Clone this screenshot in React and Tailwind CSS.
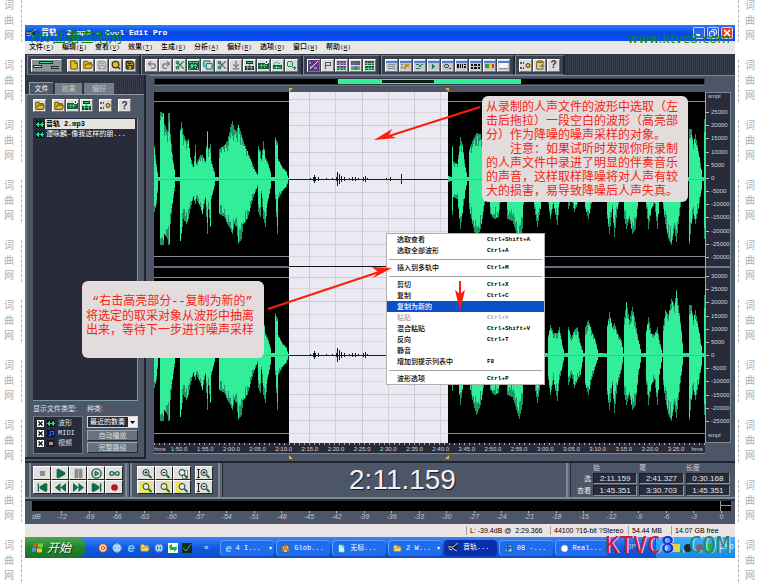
import { useState } from "react";
import {
  ArrowDownToLine,
  Chrome,
  CirclePlay,
  ClipboardPaste,
  Copy,
  File,
  FolderOpen,
  Globe,
  Infinity as Loop,
  Pause,
  Play,
  Redo2,
  Save,
  Scissors,
  Search,
  SkipBack,
  SkipForward,
  Square,
  Table2,
  Undo2,
  X,
} from "lucide-react";

const menus = ["文件(F)", "编辑(E)", "查看(V)", "效果(T)", "生成(G)", "分析(A)", "偏好(R)", "选项(O)", "窗口(W)", "帮助(H)"];

const contextMenu = [
  ["选取查看", "Ctrl+Shift+A"],
  ["选取全部波形", "Ctrl+A"],
  null,
  ["插入到多轨中", "Ctrl+M"],
  null,
  ["剪切", "Ctrl+X"],
  ["复制", "Ctrl+C"],
  ["复制为新的", ""],
  ["粘贴", "Ctrl+V", true],
  ["混合粘贴", "Ctrl+Shift+V"],
  ["反向", "Ctrl+T"],
  ["静音", ""],
  ["增加到提示列表中", "F8"],
  null,
  ["波形选项", "Ctrl+P"],
];

const times = [
  "1:50.0", "1:55.0", "2:00.0", "2:05.0", "2:10.0", "2:15.0", "2:20.0", "2:25.0", "2:30.0", "2:35.0",
  "2:40.0", "2:45.0", "2:50.0", "2:55.0", "3:00.0", "3:05.0", "3:10.0", "3:15.0", "3:20.0", "3:25.0",
];

const levels = Array.from({ length: 25 }, (_, i) => -72 + i * 3);
const topScale = Array.from({ length: 12 }, (_, i) => 25000 - i * 5000);
const bottomScale = Array.from({ length: 12 }, (_, i) => 30000 - i * 5000);

// [x, height above the centre, depth below the centre]
const envelope = [
  [0, 33, 33], [2, 15, 25], [4, 2, 2], [5, 2, 2], [6, 67, 66], [9, 66, 66], [10, 55, 55], [13, 48, 60], [14, 66, 66],
  [15, 66, 66], [16, 45, 45], [18, 25, 25], [20, 10, 12], [21, 2, 2], [25, 2, 2], [26, 50, 62], [27, 57, 55],
  [29, 45, 40], [32, 38, 45], [34, 40, 40], [36, 22, 30], [39, 12, 18], [41, 34, 25], [42, 16, 20], [46, 24, 28],
  [48, 24, 35], [51, 18, 20], [53, 48, 55], [54, 30, 30], [56, 35, 48], [57, 18, 20], [60, 8, 8], [61, 2, 2],
  [64, 2, 2], [65, 30, 35], [70, 34, 38], [73, 38, 45], [76, 52, 50], [78, 58, 55], [80, 50, 45], [82, 48, 48],
  [84, 54, 65], [87, 45, 60], [89, 38, 45], [93, 28, 40], [97, 18, 25], [100, 10, 15], [103, 5, 8], [104, 33, 33],
  [106, 28, 38], [107, 20, 15], [109, 38, 40], [111, 22, 48], [113, 18, 25], [116, 8, 10], [117, 2, 2], [120, 2, 2],
  [121, 42, 20], [123, 37, 55], [124, 20, 20], [128, 12, 12], [132, 8, 8], [134, 1, 1], [293, 1, 1], [294, 3, 3],
  [297, 2, 2], [298, 33, 36], [299, 18, 18], [303, 15, 20], [306, 42, 50], [308, 35, 35], [311, 12, 12], [313, 2, 2],
  [314, 2, 2], [315, 30, 30], [318, 38, 45], [322, 46, 60], [326, 45, 50], [328, 35, 40], [333, 5, 5], [335, 2, 2],
  [336, 25, 35], [340, 30, 40], [344, 25, 38], [349, 3, 3], [352, 2, 2], [353, 30, 40], [358, 35, 42], [365, 50, 64],
  [368, 30, 50], [370, 2, 2], [379, 2, 2], [380, 30, 30], [383, 35, 48], [386, 20, 30], [389, 2, 2], [393, 2, 2],
  [394, 20, 25], [396, 30, 40], [399, 22, 25], [403, 22, 46], [405, 28, 25], [408, 10, 12], [410, 2, 2], [413, 2, 2],
  [414, 28, 30], [417, 18, 20], [420, 25, 33], [423, 28, 25], [426, 12, 20], [429, 2, 2], [430, 2, 2], [431, 28, 30],
  [434, 35, 40], [437, 25, 25], [441, 15, 12], [444, 2, 2], [452, 2, 2], [453, 30, 40], [455, 43, 55], [458, 28, 30],
  [460, 32, 58], [463, 22, 30], [467, 15, 15], [469, 2, 2], [470, 38, 40], [472, 53, 50], [475, 35, 40],
  [478, 48, 55], [481, 33, 50], [484, 15, 20], [487, 2, 2], [491, 2, 2], [492, 25, 30], [494, 38, 50], [497, 22, 30],
  [500, 20, 25], [503, 28, 50], [505, 15, 20], [508, 2, 2], [509, 30, 30], [511, 45, 45], [514, 40, 60],
  [517, 56, 66], [520, 50, 50], [522, 65, 63], [524, 50, 45], [527, 25, 20], [529, 2, 2], [534, 2, 2], [535, 50, 65],
  [537, 50, 45], [539, 35, 35], [541, 45, 45], [544, 28, 30], [547, 10, 12], [548, 2, 2], [549, 2, 2], [550, 60, 60],
];

function noise(n) {
  const v = Math.sin(n * 127.1) * 43758.5453;
  return v - Math.floor(v);
}

function wavePath(center, rough) {
  let d = "";
  let k = 0;
  for (let x = 0; x <= 550; x++) {
    while (k < envelope.length - 2 && envelope[k + 1][0] <= x) k++;
    const [x0, u0, d0] = envelope[k];
    const [x1, u1, d1] = envelope[k + 1];
    const t = Math.min(1, (x - x0) / (x1 - x0));
    const up = (u0 + (u1 - u0) * t) * (1 - rough * noise(x + 1));
    const down = (d0 + (d1 - d0) * t) * (1 - rough * noise(x + 700));
    d += `M${x} ${Math.round(center - up)}h1V${Math.round(center + down)}h-1z`;
  }
  return d;
}

const quiet = [
  [156, 1], [159, 2], [160, 4], [161, 2], [164, 2], [172, 1], [178, 1], [182, 2], [183, 7], [185, 5],
  [187, 3], [190, 2], [195, 1], [198, 2], [201, 2], [204, 1], [209, 2], [211, 3], [213, 1], [232, 1], [236, 2], [247, 5],
];

function Waveform() {
  const centers = [87, 263];
  return (
    <svg viewBox="0 0 551 351" preserveAspectRatio="none" shapeRendering="crispEdges" className="block h-[351px] w-full bg-black">
      {[9, 164, 185, 341].map((y) => (
        <path key={y} d={`M0 ${y}h551v1h-551z`} fill="#8c8a96" />
      ))}
      {centers.map((c) => (
        <g key={c}>
          <path d={wavePath(c, 0)} fill="#1f9464" />
          <path d={wavePath(c, 0.3)} fill="#33ee99" />
          <path d={`M0 ${c}h551v1h-551z`} fill="#2bd086" />
        </g>
      ))}
      <path d="M0 174h551v2h-551z" fill="#666c80" />
      <path d="M135 0h159v351h-159z" fill="#ebeaf4" />
      {[7, 20, 33, 46, 60, 73, 100, 113, 126, 139, 152, 164, 185, 196, 209, 222, 236, 249, 276, 289, 302, 315, 328, 341].map((y, i) => (
        <path key={y} d={`M135 ${y}h159v1h-159z`} fill={i % 2 ? "#dcd6d4" : "#c8ccd4"} />
      ))}
      {[155, 181, 208, 234, 260, 286].map((x, i) => (
        <path key={x} d={`M${x} 0h1v351h-1z`} fill={i % 2 ? "#d8cfcc" : "#c6cad4"} />
      ))}
      <path d="M135 174h159v1h-159z" fill="#10131c" />
      {centers.map((c) => (
        <g key={c} fill="#0c2420">
          <path d={`M135 ${c}h159v1h-159z`} />
          {quiet.map(([x, h]) => (
            <path key={x} d={`M${x} ${c - h}h1v${h * 2}h-1z`} />
          ))}
        </g>
      ))}
    </svg>
  );
}

function ToolGroup({ children }) {
  return (
    <div className="flex items-center gap-px border-y border-r-2 border-l border-y-[#6b788a] border-r-[#20242e] border-l-[#7d8a9a] bg-[#3a4150] px-[3px]">
      {children}
    </div>
  );
}

function ToolButton({ label, children }) {
  return (
    <button
      aria-label={label}
      className="flex h-[13px] w-[13px] items-center justify-center border border-t-white border-r-[#77787c] border-b-[#77787c] border-l-white bg-[#dcdad8] text-[10px] leading-none font-bold text-[#35342a]"
    >
      {children}
    </button>
  );
}

function Tool({ icon: Icon, color = "text-[#1c7a4a]", fill = "none", label }) {
  return (
    <ToolButton label={label}>
      <Icon size={10} strokeWidth={3} fill={fill} className={color} />
    </ToolButton>
  );
}

function WaveGlyph() {
  return (
    <svg width="8" height="7" viewBox="0 0 8 7" shapeRendering="crispEdges" className="shrink-0">
      <path d="M0 0h8v7H0z" fill="#07140f" />
      <path d="M0 3h8v1H0zM1 2h1v3H1zM2 1h1v5H2zM5 2h1v3H5zM6 1h1v5H6z" fill="#2fd68c" />
    </svg>
  );
}

// Eleven by eleven pixel drawings for the edit commands
const waveArt = {
  spectrum: [["#6b2f88", "M0 0h11v11H0z"], ["#2cc873", "M1 2h2v2H1zM2 6h2v2H2zM6 7h3v2H6z"], ["#f0e8f4", "M9 1h1v1H9zM8 2h1v1H8zM7 3h1v1H7zM6 4h1v1H6zM5 5h1v1H5zM4 6h1v1H4zM3 7h1v1H3zM2 8h1v1H2z"]],
  flag: [["#5d4f78", "M3 2h6v1H3zM3 3h1v6H3zM8 3h1v2H8zM4 5h5v1H4z"]],
  both: [["#7b3c96", "M1 1h9v4H1zM1 6h9v4H1z"], ["#2cc873", "M1 3h9v1H1zM3 2h2v3H3zM7 2h1v3H7zM1 8h9v1H1zM3 7h2v3H3zM7 7h1v3H7z"]],
  left: [["#7b3c96", "M1 1h9v4H1z"], ["#b478c8", "M1 6h9v4H1z"], ["#1c9c54", "M2 3h7v1H2zM3 2h2v3H3zM2 8h7v1H2zM5 6h2v4H5z"]],
  right: [["#1c5c38", "M1 1h9v4H1zM1 6h9v4H1z"], ["#38dc84", "M1 3h9v1H1zM3 2h1v3H3zM7 2h1v3H7zM1 8h9v1H1zM4 7h1v3H4zM7 7h1v3H7z"]],
  framed: [["#145c38", "M0 1h11v9H0z"], ["#38dc84", "M1 2h3v1H1zM7 2h3v1H7zM2 5h7v1H2zM3 4h2v4H3zM7 4h1v4H7zM1 8h2v1H1z"], ["#f0f4f0", "M5 2h1v1H5zM9 8h1v1H9z"]],
  mix: [["#123a24", "M2 1h7v3H2zM1 6h9v4H1z"], ["#2cc873", "M3 2h5v1H3zM5 4h1v2H5zM2 7h7v1H2zM3 6h1v4H3zM7 6h1v4H7z"]],
  insert: [["#145c38", "M0 3h11v6H0z"], ["#2cc873", "M1 5h8v1H1zM3 4h1v4H3zM6 4h1v4H6z"], ["#e4ece8", "M7 0h3v4H7z"], ["#30544c", "M8 1h1v2H8z"]],
  convert: [["#145c38", "M1 5h9v4H1z"], ["#38c8a0", "M3 2h3v1H3zM6 3h2v1H6zM2 3h1v2H2z"], ["#38dc84", "M2 7h7v1H2zM4 6h1v3H4z"]],
  sample: [["#1c9460", "M2 1h4v1H2zM1 2h1v4H1zM6 2h1v4H6zM2 6h4v1H2zM6 7h3v1H6zM8 6h1v4H8zM9 7h1v2H9z"], ["#8ce8c0", "M3 3h2v2H3z"]],
};

function WaveTool({ label, art }) {
  return (
    <ToolButton label={label}>
      <svg width="11" height="11" viewBox="0 0 11 11" shapeRendering="crispEdges" className="shrink-0">
        {waveArt[art].map(([fill, d]) => (
          <path key={d} fill={fill} d={d} />
        ))}
      </svg>
    </ToolButton>
  );
}

const windowArt = {
  lines: [["#8c9098", "M2 4h7v1H2zM2 6h7v1H2zM2 8h7v1H2z"]],
  cue: [["#b8941c", "M5 4h4v3H5zM4 6h2v3H4z"], ["#70747c", "M1 4h2v1H1zM1 7h2v1H1z"]],
  list: [["#1d7864", "M2 4h3v1H2zM5 5h2v2H5zM7 4h2v1H7zM2 8h4v1H2z"]],
  play: [["#1c7a4a", "M4 4h1v5H4zM5 5h1v3H5zM6 6h1v1H6z"]],
  zoom: [["#3c4450", "M3 4h3v1H3zM2 5h1v2H2zM6 5h1v2H6zM3 7h3v1H3zM7 8h2v1H7z"]],
  time: [["#101010", "M1 4h2v4H1zM4 4h1v4H4zM6 4h1v4H6zM8 4h2v1H8zM8 6h2v2H8z"]],
  range: [["#101010", "M1 4h2v2H1zM4 4h3v2H4zM8 4h2v2H8zM1 7h2v2H1zM4 7h3v2H4zM8 7h2v2H8z"]],
  meter: [["#2ca03c", "M1 4h4v4H1z"], ["#e8c820", "M5 4h3v4H5z"], ["#d83a24", "M8 4h2v4H8z"]],
  status: [["#f4f4f4", "M1 3h9v5H1z"], ["#8c9098", "M1 8h9v1H1z"]],
};

function WindowTool({ label, art }) {
  return (
    <ToolButton label={label}>
      <svg width="11" height="11" viewBox="0 0 11 11" shapeRendering="crispEdges" className="shrink-0">
        <path d="M0 1h11v9H0z" fill="#c4c8ce" />
        <path d="M0 1h11v2H0z" fill="#4a80dc" />
        {windowArt[art].map(([fill, d]) => (
          <path key={d} fill={fill} d={d} />
        ))}
      </svg>
    </ToolButton>
  );
}

function CueTool() {
  return (
    <ToolButton label="选项">
      <svg width="11" height="9" viewBox="0 0 11 9" className="shrink-0">
        <path d="M0 1h2v2H0zM0 6h2v2H0zM3 1h1v2H3zM3 6h1v2H3z" fill="#555" />
        <circle cx="8" cy="4.5" r="2" fill="#e8c820" stroke="#4a4010" />
      </svg>
    </ToolButton>
  );
}

function Toolbar() {
  const gold = "text-[#8a6c08]";
  return (
    <div className="flex h-[21px] bg-[#2b2e3c] bg-[repeating-linear-gradient(90deg,#2b2e3c_0_1px,#3b404e_1px_2px)] px-0.5 pt-px">
      <ToolGroup>
        <button aria-label="多轨视图" className="mr-1 flex h-[13px] w-[31px] items-center justify-center border border-t-white border-r-[#777] border-b-[#777] border-l-white bg-[#8c9494]">
          <svg width="27" height="9" viewBox="0 0 27 9" shapeRendering="crispEdges">
            <path d="M6 0h14v3H6zM0 4h9v3H0zM18 5h8v3h-8z" fill="#14302a" />
            <path d="M7 1h12v1H7zM19 6h7v1h-7z" fill="#33d98e" />
            <path d="M1 5h7v1H1z" fill="#d8dcdc" />
          </svg>
        </button>
        <Tool icon={File} label="新建" color={gold} fill="#e0c030" />
        <Tool icon={FolderOpen} label="打开" color={gold} fill="#e0c030" />
        <Tool icon={Save} label="保存" color="text-[#9a9b9e]" />
        <Tool icon={Search} label="另存" color="text-[#3c3a14]" fill="#e0c030" />
        <Tool icon={Save} label="全部保存" color="text-[#2c2a10]" fill="#c8a820" />
      </ToolGroup>
      <ToolGroup>
        <Tool icon={Undo2} label="撤消" color="text-[#77787c]" />
        <Tool icon={Redo2} label="重做" color="text-[#77787c]" />
        <Tool icon={Scissors} label="修剪" />
        <WaveTool art="framed" label="波形" />
        <Tool icon={Copy} label="复制" color="text-[#168a80]" />
        <Tool icon={Scissors} label="剪切" color="text-[#22706a]" />
        <Tool icon={ArrowDownToLine} label="粘贴" color="text-[#77787c]" />
        <WaveTool art="mix" label="混合" />
        <WaveTool art="insert" label="插入" />
        <WaveTool art="convert" label="转换" />
        <WaveTool art="sample" label="采样" />
      </ToolGroup>
      <ToolGroup>
        <WaveTool art="spectrum" label="频谱" />
        <WaveTool art="flag" label="标记" />
        <WaveTool art="both" label="通道" />
        <WaveTool art="left" label="左通道" />
        <WaveTool art="right" label="右通道" />
      </ToolGroup>
      <ToolGroup>
        <WindowTool art="lines" label="管理器" />
        <WindowTool art="cue" label="提示列表" />
        <WindowTool art="list" label="播放列表" />
        <WindowTool art="play" label="走带" />
        <WindowTool art="zoom" label="缩放" />
        <WindowTool art="time" label="时间" />
        <WindowTool art="range" label="选区" />
        <WindowTool art="meter" label="电平" />
        <WindowTool art="status" label="状态" />
      </ToolGroup>
      <ToolGroup>
        <CueTool />
        <Tool icon={ClipboardPaste} label="脚本" color={gold} />
        <ToolButton>?</ToolButton>
      </ToolGroup>
    </div>
  );
}

function FilePanel() {
  const [types, setTypes] = useState({ 波形: true, MIDI: true, 视频: true });
  const gold = "text-[#7c6210]";
  return (
    <section className="flex w-[125px] shrink-0 flex-col border-r-4 border-r-[#4d5668] bg-[#4d5666] text-[7px] leading-[10px]">
      <div className="flex flex-1 flex-col border-r-2 border-[#20232e]">
        <div className="flex h-[19px] items-end gap-0.5 bg-[repeating-linear-gradient(90deg,#2b2e3c_0_1px,#383c4a_1px_2px)] pl-1 text-[#c2c8ce]">
          <button className="h-[12px] w-[24px] border-t border-l border-[#8b98a6] bg-[#4d5666] text-white">文件</button>
          <button className="h-[11px] w-[27px] bg-[#747e8a]">效果</button>
          <button className="h-[11px] w-[30px] bg-[#747e8a]">偏好</button>
        </div>
        <div className="flex flex-1 flex-col border-t border-l-2 border-t-[#8b98a6] border-l-[#6a7686] px-[6px] pb-[3px]">
          <div className="flex gap-px pt-1 pb-[6px]">
            <Tool icon={FolderOpen} label="打开文件" color={gold} fill="#e0c030" />
            <div className="ml-[5px] flex gap-px">
              <Tool icon={FolderOpen} label="关闭文件" color={gold} fill="#e0c030" />
              <WaveTool art="insert" label="插入多轨" />
              <WaveTool art="mix" label="编辑文件" />
            </div>
            <div className="mx-[5px] flex">
              <CueTool />
            </div>
            <ToolButton>?</ToolButton>
          </div>
          <ul className="flex-1 border-r border-b border-[#7d99a0] bg-[#282b3a] pt-px text-white">
            <li className="flex items-center gap-px pr-0.5 pl-[3px]">
              <WaveGlyph />
              <span className="flex-1 bg-[#e6e2de] pl-px font-bold whitespace-pre text-black">
                音轨{"  "}<span className="font-['Liberation_Mono','Noto_Sans_CJK_SC',monospace]">2.mp3</span>
              </span>
            </li>
            <li className="flex items-center gap-0.5 pl-[3px]">
              <WaveGlyph />
              <span className="font-['Liberation_Mono','Noto_Sans_CJK_SC',monospace]">谭咏麟-像我这样的朋...</span>
            </li>
          </ul>
          <div className="mt-[3px] flex gap-1 text-[#dde2e6]">
            <fieldset className="w-[50px]">
              <legend className="whitespace-nowrap">显示文件类型:</legend>
              <div className="mt-0.5 flex h-[38px] flex-col border border-[#6d7a88] bg-[#282b3a] pt-px pl-[3px]">
                {Object.keys(types).map((name) => (
                  <label key={name} className="flex h-[10px] items-center gap-[3px]">
                    <span className="grid">
                      <input
                        type="checkbox"
                        checked={types[name]}
                        onChange={() => setTypes({ ...types, [name]: !types[name] })}
                        className="col-start-1 row-start-1 h-[7px] w-[7px] appearance-none bg-white"
                      />
                      {types[name] && (
                        <X size={7} strokeWidth={4} className="pointer-events-none col-start-1 row-start-1 text-black" />
                      )}
                    </span>
                    {name === "波形" && <WaveGlyph />}
                    {name === "MIDI" && (
                      <svg width="8" height="7" viewBox="0 0 8 7" shapeRendering="crispEdges">
                        <path d="M0 0h8v7H0z" fill="#0a1030" />
                        <path d="M3 1h4v1H3zM3 2h1v4H3zM6 2h1v3H6zM2 5h1v1H2zM5 4h1v1H5z" fill="#2c70ff" />
                      </svg>
                    )}
                    {name === "视频" && (
                      <svg width="8" height="7" viewBox="0 0 8 7" shapeRendering="crispEdges">
                        <path d="M0 0h8v7H0z" fill="#1b1c22" />
                        <path d="M2 2h4v3H2z" fill="#a89c98" />
                      </svg>
                    )}
                    <span className="font-['Liberation_Mono','Noto_Sans_CJK_SC',monospace]">{name}</span>
                  </label>
                ))}
              </div>
            </fieldset>
            <div className="flex flex-1 flex-col">
              <label htmlFor="sort">种类:</label>
              <div className="mt-0.5 grid">
                <select
                  id="sort"
                  className="col-start-1 row-start-1 h-[12px] w-full appearance-none border border-[#d8d6d4] bg-[#282b3a] pl-0.5 text-[7px] leading-[10px] text-white"
                >
                  <option>最近的数奏</option>
                </select>
                <svg width="9" height="10" viewBox="0 0 9 10" className="pointer-events-none col-start-1 row-start-1 mr-px self-center justify-self-end">
                  <path d="M0 0h9v10H0z" fill="#f4f2f0" />
                  <path d="M2 4h5L4.500 7z" fill="#000" />
                </svg>
              </div>
              <button className="mt-0.5 h-[11px] border border-t-[#9aa8b2] border-r-[#242833] border-b-[#242833] border-l-[#9aa8b2] bg-[#66727e] leading-[9px]">自动播放</button>
              <button className="mt-px h-[11px] border border-t-[#9aa8b2] border-r-[#242833] border-b-[#242833] border-l-[#9aa8b2] bg-[#66727e] leading-[9px]">完整路径</button>
            </div>
          </div>
        </div>
      </div>
      <div className="h-1 border-t-2 border-[#20232e]" />
    </section>
  );
}

function ScaleCells({ values }) {
  return (
    <div className="flex h-[158px] flex-col">
      {values.map((v) => (
        <span key={v} className="flex flex-1 items-center gap-0.5">
          <i className="h-px w-[3px] bg-[#b8bcc4]" />
          {v}
        </span>
      ))}
    </div>
  );
}

function Marker({ className }) {
  return (
    <svg width="4" height="4" viewBox="0 0 4 4" className={className}>
      <path d="M0 0h4L0 4z" fill="#e0b820" />
    </svg>
  );
}

function WavePanel() {
  return (
    <section className="min-w-0 flex-1 border-t border-[#7a8796] bg-[#4d5666] pt-0.5 pr-1 pl-1 text-[6px] text-[#d0d4dc]">
      <div className="mr-[26px] flex h-[7px] border border-[#333a46] bg-black">
        <div className="w-1/3" />
        <div className="w-[8%] bg-[#33ee99]" />
        <div className="w-[9.5%] border-y border-[#33ee99] bg-[#0b1c18]" />
        <div className="w-[15.8%] bg-[#33ee99]" />
      </div>
      <div className="mr-[26px] flex h-[7px] items-end border-t border-[#66727e]">
        <div className="w-[24.5%]" />
        <div className="flex w-[29%] justify-between">
          <Marker />
          <Marker className="-scale-x-100" />
        </div>
      </div>
      <div className="flex">
        <div className="min-w-0 flex-1">
          <Waveform />
        </div>
        <div className="flex w-[26px] flex-col border-t border-r border-b border-[#7a8796] border-l border-l-[#a0a4ac] bg-[#282b3a]">
          <span className="h-[13px] pl-0.5 leading-[7px]">smpl</span>
          <ScaleCells values={topScale} />
          <i className="mt-0.5 mb-0.5 h-0.5 bg-[#6d7888]" />
          <ScaleCells values={bottomScale} />
          <span className="pt-1 pl-0.5 leading-[7px]">smpl</span>
        </div>
      </div>
      <div className="mr-[26px] flex h-[11px] items-end border-b border-[#7a8796] bg-[#282b3a] bg-[repeating-linear-gradient(90deg,#a8acb4_0_1px,transparent_1px_5px)] bg-[length:100%_2px] bg-no-repeat text-center leading-[8px]">
        <span className="w-[12px]">hms</span>
        {times.map((t) => (
          <span key={t} className="flex-1">{t}</span>
        ))}
        <span className="w-[16px]">hms</span>
      </div>
      <div className="mr-[26px] flex h-[7px] items-start pt-px">
        <div className="w-[24.5%]" />
        <div className="flex w-[29%] justify-between">
          <Marker className="-scale-y-100" />
          <Marker className="-scale-100" />
        </div>
      </div>
    </section>
  );
}

function BigTool({ icon: Icon, label, color = "text-[#0f6b4a]", fill = "none", children }) {
  return (
    <button
      aria-label={label}
      className="flex h-[14px] w-[18px] items-center justify-center border border-t-white border-r-[#22252e] border-b-[#22252e] border-l-white bg-[#e2dfdc]"
    >
      {Icon ? <Icon size={11} strokeWidth={3} fill={fill} className={color} /> : children}
    </button>
  );
}

function Rewind({ size, className }) {
  return (
    <svg width={size} height={size} viewBox="0 0 10 10" className={className} fill="currentColor">
      <path d="M5 1v8L0 5zM10 1v8L5 5z" />
    </svg>
  );
}

function Forward({ size, className }) {
  return (
    <svg width={size} height={size} viewBox="0 0 10 10" className={className} fill="currentColor">
      <path d="M0 1v8l5-4zM5 1v8l5-4z" />
    </svg>
  );
}

function Record({ size, className }) {
  return (
    <svg width={size} height={size} viewBox="0 0 10 10" className={className} fill="currentColor">
      <circle cx="5" cy="5" r="3" />
    </svg>
  );
}

function Lens({ mark, page, vertical }) {
  return (
    <svg width="14" height="11" viewBox="0 0 14 11" className="shrink-0">
      {page && <path d={page[1]} fill={page[0]} stroke={page[2]} />}
      {vertical && <path d="M1.500 1v9M0 1.500h3M0 9.500h3" stroke="#222" />}
      <circle cx="7" cy="4.500" r="3" fill="#dcecea" stroke="#26302e" />
      {mark && <path d={mark} stroke="#26302e" />}
      <path d="M9.500 7l3 3" stroke="#12704c" strokeWidth="2" />
    </svg>
  );
}

function Splitter() {
  return <div className="w-[5px] border-r border-l-2 border-r-[#252936] border-l-[#7d8a9a] bg-[#5d6878]" />;
}

function TransportPanel() {
  const plus = "M5.500 4.500h3M7 3v3";
  const minus = "M5.500 4.500h3";
  return (
    <section className="flex h-[38px] border-y-2 border-t-[#1f2430] border-b-[#7d8a9a] bg-[#4d5666] pl-1">
      <div className="flex items-center border-l-2 border-[#7d8a9a] px-0.5">
        <div className="grid grid-cols-5">
          <BigTool label="停止">
            <i className="h-[5px] w-[5px] bg-[#8b8c90]" />
          </BigTool>
          <BigTool icon={Play} label="播放" fill="#0f6b4a" />
          <BigTool icon={Pause} label="暂停" color="text-[#8b8c90]" fill="#8b8c90" />
          <BigTool icon={CirclePlay} label="播放到结尾" />
          <BigTool icon={Loop} label="循环播放" />
          <BigTool icon={SkipBack} label="到开头" fill="#0f6b4a" />
          <BigTool icon={Rewind} label="快退" />
          <BigTool icon={Forward} label="快进" />
          <BigTool icon={SkipForward} label="到结尾" fill="#0f6b4a" />
          <BigTool icon={Record} label="录音" color="text-[#b01828]" />
        </div>
      </div>
      <Splitter />
      <div className="flex items-center gap-1 border-l-2 border-[#7d8a9a] px-[5px]">
        <div className="grid grid-cols-3">
          <BigTool label="水平放大">
            <Lens mark={plus} />
          </BigTool>
          <BigTool label="水平缩小">
            <Lens mark={minus} />
          </BigTool>
          <BigTool label="全部显示">
            <Lens page={["#fafafa", "M7.500 2.500h5v8h-5z", "#888"]} />
          </BigTool>
          <BigTool label="缩放到选区">
            <Lens page={["#f4ec50", "M1.500 .5h11v10h-11z", "#e8dc60"]} />
          </BigTool>
          <BigTool label="放大左边缘">
            <Lens page={["#f4ec50", "M7.500 .5h5v10h-5z", "#e8dc60"]} />
          </BigTool>
          <BigTool label="放大右边缘">
            <Lens page={["#f4ec50", "M1.500 .5h5v10h-5z", "#e8dc60"]} />
          </BigTool>
        </div>
        <div className="grid">
          <BigTool label="垂直放大">
            <Lens vertical mark={plus} />
          </BigTool>
          <BigTool label="垂直缩小">
            <Lens vertical mark={minus} />
          </BigTool>
        </div>
      </div>
      <Splitter />
      <div className="flex flex-1 items-center justify-center pl-4 text-[28px] leading-none text-[#f2f0f6] [text-shadow:1px_1px_0_#1c2028]">
        2:11.159
      </div>
      <Splitter />
      <table className="mr-[3px] w-[161px] border-separate border-spacing-x-[2px] border-spacing-y-px text-center text-[8px] leading-[9px] text-[#e4e6ea]">
        <thead className="text-left text-[7px] leading-[8px] text-[#c8ced4]">
          <tr>
            <td className="w-[18px]" />
            <th className="p-0 font-normal">始</th>
            <th className="p-0 font-normal">尾</th>
            <th className="p-0 font-normal">长度</th>
          </tr>
        </thead>
        <tbody>
          {[
            ["选", "2:11.159", "2:41.327", "0:30.168"],
            ["查看", "1:45.351", "3:30.703", "1:45.351"],
          ].map(([name, ...cells]) => (
            <tr key={name}>
              <th className="p-0 text-right text-[7px] font-normal">{name}</th>
              {cells.map((c, i) => (
                <td key={i} className="border border-t-[#1c1f29] border-r-[#8592a0] border-b-[#8592a0] border-l-[#1c1f29] bg-[#282b3a] p-0">{c}</td>
              ))}
            </tr>
          ))}
        </tbody>
      </table>
    </section>
  );
}

function LevelMeter() {
  return (
    <section className="border-t-2 border-[#2a2e3a] bg-[#4d5666] pl-[7px] text-[7px] leading-[8px] text-[#c0c4cc]">
      <div className="mr-1 flex h-[10px] justify-end bg-black">
        <div className="grid w-[11px] grid-rows-2 divide-y divide-[#9a9ca4] border-l border-[#9a9ca4]">
          <i />
          <i />
        </div>
      </div>
      <div className="flex h-[13px] items-start text-center italic">
        <span className="w-[16px] pt-0.5 text-left">dB</span>
        {levels.map((n) => (
          <span key={n} className="flex flex-1 flex-col items-center">
            <i className="h-0.5 w-px bg-[#c0c4cc]" />
            {n}
          </span>
        ))}
      </div>
    </section>
  );
}

function StatusBar() {
  return (
    <div className="flex h-[13px] items-stretch bg-[#eae5e4] py-0.5 text-[7px] leading-[9px] whitespace-pre text-black">
      <span className="flex-1" />
      <span className="w-[84px] border-l border-[#a8a09c] pl-[3px]">L: -39.4dB @  2:29.366</span>
      <span className="w-[78px] border-l border-[#a8a09c] pl-[3px]">44100 ?16-bit ?Stereo</span>
      <span className="w-[43px] border-l border-[#a8a09c] pl-[3px]">54.44 MB</span>
      <span className="w-[64px] border-l border-[#a8a09c] pl-[3px]">14.07 GB free</span>
    </div>
  );
}

function CoolIcon() {
  return (
    <svg width="11" height="9" viewBox="0 0 11 9" className="shrink-0">
      <path d="M0 3l5-1 5-2-2 4 2 5-5-3-5-1z" fill="#101828" />
      <path d="M0 4h5l5-4M4 5l5 3M1 6l3 1" stroke="#d8dce4" fill="none" />
    </svg>
  );
}

function Task({ icon, children, active, arrow }) {
  return (
    <button
      className={`flex h-[16px] min-w-0 flex-1 items-center gap-1 rounded-sm pl-1 whitespace-nowrap ${
        active ? "bg-[#0a2ea8]" : "border-t border-l border-[#5c9cff] bg-[#1f6cec]"
      }`}
    >
      {icon}
      <span className="flex-1 text-left font-['Liberation_Mono','Noto_Sans_CJK_SC',monospace]">{children}</span>
      {arrow && <span className="pr-0.5 text-[6px]">▾</span>}
    </button>
  );
}

function Taskbar() {
  return (
    <footer className="flex h-[21px] items-center bg-linear-to-b from-[#3a86f4] via-[#0f5ae0] to-[#0c4cc8] text-[7px] text-white">
      <button className="flex h-full w-[60px] items-center gap-1 rounded-r-lg bg-linear-to-b from-[#4aa850] via-[#22842a] to-[#1c7424] pl-[7px] text-[12px] leading-none italic [text-shadow:1px_1px_0_#0c3c10]">
        <svg width="11" height="11" viewBox="0 0 11 11">
          <path d="M1 1q2-1 4 0v4q-2-1-4 0z" fill="#e8502c" />
          <path d="M6 1q2 1 5 0v4q-3 1-5 0z" fill="#7cc83c" />
          <path d="M0 6q2-1 4 0v4q-2-1-4 0z" fill="#5494f0" />
          <path d="M5 6q2 1 5 0v4q-3 1-5 0z" fill="#f4c82c" />
        </svg>
        开始
      </button>
      <div className="ml-[13px] flex items-center gap-1">
        <Chrome size={10} color="#c03020" fill="#f4e8a0" />
        <Globe size={10} color="#6cb0f0" fill="#ddeaf8" />
        <span className="w-[10px] text-center text-[13px] leading-none font-bold text-[#7cc4ff] italic">e</span>
        <FolderOpen size={10} color="#a8842c" fill="#f4d868" />
        <Globe size={10} color="#2c74c8" fill="#e8f4fc" />
        <svg width="10" height="10" viewBox="0 0 10 10">
          <path d="M0 0h10v10H0z" fill="#f4fff4" />
          <path d="M1 3l3-2v3h4V2l1 4-3 3V7H2z" fill="#1cb43c" />
        </svg>
        <svg width="10" height="10" viewBox="0 0 10 10">
          <path d="M0 0h10v10H0z" fill="#0c2c20" />
          <path d="M1 5l3 3 5-7" stroke="#58a878" fill="none" />
        </svg>
      </div>
      <span className="mr-3 ml-3 text-[8px]">»</span>
      <div className="flex w-[388px] gap-0.5">
        <Task arrow icon={<span className="text-[11px] leading-none font-bold text-[#8cd0ff] italic">e</span>}>4 I...</Task>
        <Task icon={<Save size={9} color="#7c3c2c" fill="#e8d04c" />}>Glob...</Task>
        <Task icon={<File size={9} color="#2c8cb4" fill="#d4f0f8" />}>无标...</Task>
        <Task arrow icon={<FolderOpen size={9} color="#a8842c" fill="#f4d868" />}>2 W...</Task>
        <Task active icon={<CoolIcon />}>音轨...</Task>
        <Task icon={<Table2 size={9} color="#3c4c3c" fill="#c8d4c0" />}>08 -...</Task>
        <Task icon={<CirclePlay size={9} color="#2c5cb0" fill="#ffffff" />}>Real...</Task>
      </div>
      <div className="flex-1 text-center text-[#a8c8f8]">JP</div>
      <div className="flex h-full w-[80px] items-center gap-1 border-l border-[#0a58c8] bg-linear-to-b from-[#3cb0fc] to-[#1088e8] pl-1">
        <Globe size={8} color="#d8ecff" />
        <span className="h-2 w-2 bg-[#e8d040]" />
        <span className="h-2 w-2 rounded-full bg-[#20282c]" />
        <span className="h-2 w-2 rounded-full bg-[#686c74]" />
        <span className="h-2 w-2 bg-[#20b040]" />
        <span>2:00</span>
      </div>
    </footer>
  );
}

function ContextMenu() {
  return (
    <div role="menu" className="absolute top-[233px] left-[361px] w-[159px] border border-[#b4b0b0] bg-white text-[7px] leading-[11px] font-medium text-black">
      {contextMenu.map((item, i) =>
        item ? (
          <button
            key={i}
            role="menuitem"
            disabled={item[2]}
            className={`flex h-[11px] w-full pl-[10px] text-left ${
              item[0] === "复制为新的" ? "bg-[#0a50c8] text-white" : item[2] ? "text-[#a8a8a8]" : ""
            }`}
          >
            <span className="w-[90px]">{item[0]}</span>
            <span className="font-['Liberation_Mono',monospace] text-[6px] font-bold">{item[1]}</span>
          </button>
        ) : (
          <div key={i} className="flex h-[6px] items-center px-0.5">
            <i className="h-px flex-1 bg-[#a8a4a4]" />
          </div>
        )
      )}
    </div>
  );
}

function Arrows() {
  return (
    <svg width="710" height="583" viewBox="0 0 710 583" className="pointer-events-none absolute top-0 left-0" stroke="#ff1c08" fill="#ff1c08">
      <path d="M455 107L364 136" strokeWidth="2" />
      <path d="M349 140l18-11-3 6 7 3z" stroke="none" />
      <path d="M243 309L354 272" strokeWidth="2" />
      <path d="M367 268l-20-1 6 5-5 6z" stroke="none" />
      <path d="M435 281v18" strokeWidth="2" />
      <path d="M435 311l-5-21 5 4 5-4z" stroke="none" />
    </svg>
  );
}

function SideStrip({ right }) {
  return (
    <aside className="flex w-[25px] shrink-0 flex-col gap-[18px] text-[10px] leading-[12px] text-[#b0b0b0]">
      {Array.from({ length: 10 }, (_, i) => (
        <div
          key={i}
          className={`flex flex-col gap-[3px] border-dashed border-[#b4aeb8] ${
            right ? "ml-[3px] border-l pl-[6px]" : "mr-[3px] border-r pl-1"
          }`}
        >
          <span>词</span>
          <span>曲</span>
          <span>网</span>
        </div>
      ))}
    </aside>
  );
}

export default function App() {
  return (
    <div className="flex min-h-screen bg-white font-['Liberation_Sans','Noto_Sans_CJK_SC',sans-serif]">
      <SideStrip />
      <main className="relative min-w-0 flex-1 pt-[25px]">
        <header className="flex h-[16px] items-center gap-1 bg-linear-to-b from-[#2c7cf8] via-[#0846e4] to-[#0850fc] pr-0.5 pl-px">
          <CoolIcon />
          <h1 className="flex-1 font-['Liberation_Mono','Noto_Sans_CJK_SC',monospace] text-[8px] leading-none font-bold whitespace-pre text-white">
            音轨  2.mp3 - Cool Edit Pro
          </h1>
          <div className="flex gap-0.5">
            <button aria-label="最小化" className="flex h-[12px] w-[12px] items-end rounded-xs border border-white/70 bg-[#2c64e8] p-0.5">
              <i className="h-0.5 w-1 bg-white" />
            </button>
            <button aria-label="还原" className="flex h-[12px] w-[12px] items-center justify-center rounded-xs border border-white/70 bg-[#2c64e8] text-white">
              <Copy size={8} strokeWidth={3} className="-scale-x-100" />
            </button>
            <button aria-label="关闭" className="flex h-[12px] w-[12px] items-center justify-center rounded-xs border border-white/70 bg-[#e04424] text-white">
              <X size={10} strokeWidth={4} />
            </button>
          </div>
        </header>
        <nav className="flex h-[13px] items-center bg-[#ebe7e4] pl-1 text-black">
          {menus.map((m) => (
            <button key={m} className="w-[33px] text-left text-[7px] leading-[12px] font-medium whitespace-nowrap">
              {m.slice(0, 2)}
              <span className="font-['Liberation_Mono',monospace] text-[6px]">
                (<u>{m[3]}</u>)
              </span>
            </button>
          ))}
        </nav>
        <Toolbar />
        <div className="flex">
          <FilePanel />
          <WavePanel />
        </div>
        <TransportPanel />
        <LevelMeter />
        <StatusBar />
        <Taskbar />

        <p className="pointer-events-none absolute top-[29px] left-[5px] font-['DejaVu_Sans','Noto_Sans_CJK_SC',sans-serif] text-[14px] leading-[16px] text-[#108420]">
          ktv曲谱查吧网
        </p>
        <a href="#top" className="absolute top-[31px] right-[5px] font-['DejaVu_Sans',sans-serif] text-[13px] leading-[16px] text-[#108420]">
          www.ktvc8.com
        </a>

        <div className="absolute top-[96px] left-[457px] w-[206px] rounded-md bg-[#e2dcdd] px-1 py-1 text-[12px] leading-[14px] whitespace-nowrap text-[#f42414]">
          <p>从录制的人声文件的波形中选取（左</p>
          <p>击后拖拉）一段空白的波形（高亮部</p>
          <p>分）作为降噪的噪声采样的对象。</p>
          <p className="indent-[24px]">注意：如果试听时发现你所录制</p>
          <p>的人声文件中录进了明显的伴奏音乐</p>
          <p>的声音，这样取样降噪将对人声有较</p>
          <p>大的损害，易导致降噪后人声失真。</p>
        </div>
        <div className="absolute top-[281px] left-[57px] w-[182px] rounded-md bg-[#e2dcdd] px-1 pt-[14px] pb-[21px] text-[12px] leading-[14px] whitespace-nowrap text-[#f42414]">
          <p className="indent-[6px] font-['Liberation_Mono','Noto_Sans_CJK_SC',monospace]">“右击高亮部分--复制为新的”</p>
          <p>将选定的取采对象从波形中抽离</p>
          <p>出来，等待下一步进行噪声采样</p>
        </div>

        <ContextMenu />
        <Arrows />
        <p className="pointer-events-none absolute top-[534px] right-[5px] font-['DejaVu_Sans_Mono',monospace] text-[23px] leading-[22px] text-[#d81838] [text-shadow:1px_0_0_#f8d0dc]">
          KTVC<span className="text-[#1c2ce0]">8</span>
          <span className="text-[#10907c]">.COM</span>
        </p>
      </main>
      <SideStrip right />
    </div>
  );
}
